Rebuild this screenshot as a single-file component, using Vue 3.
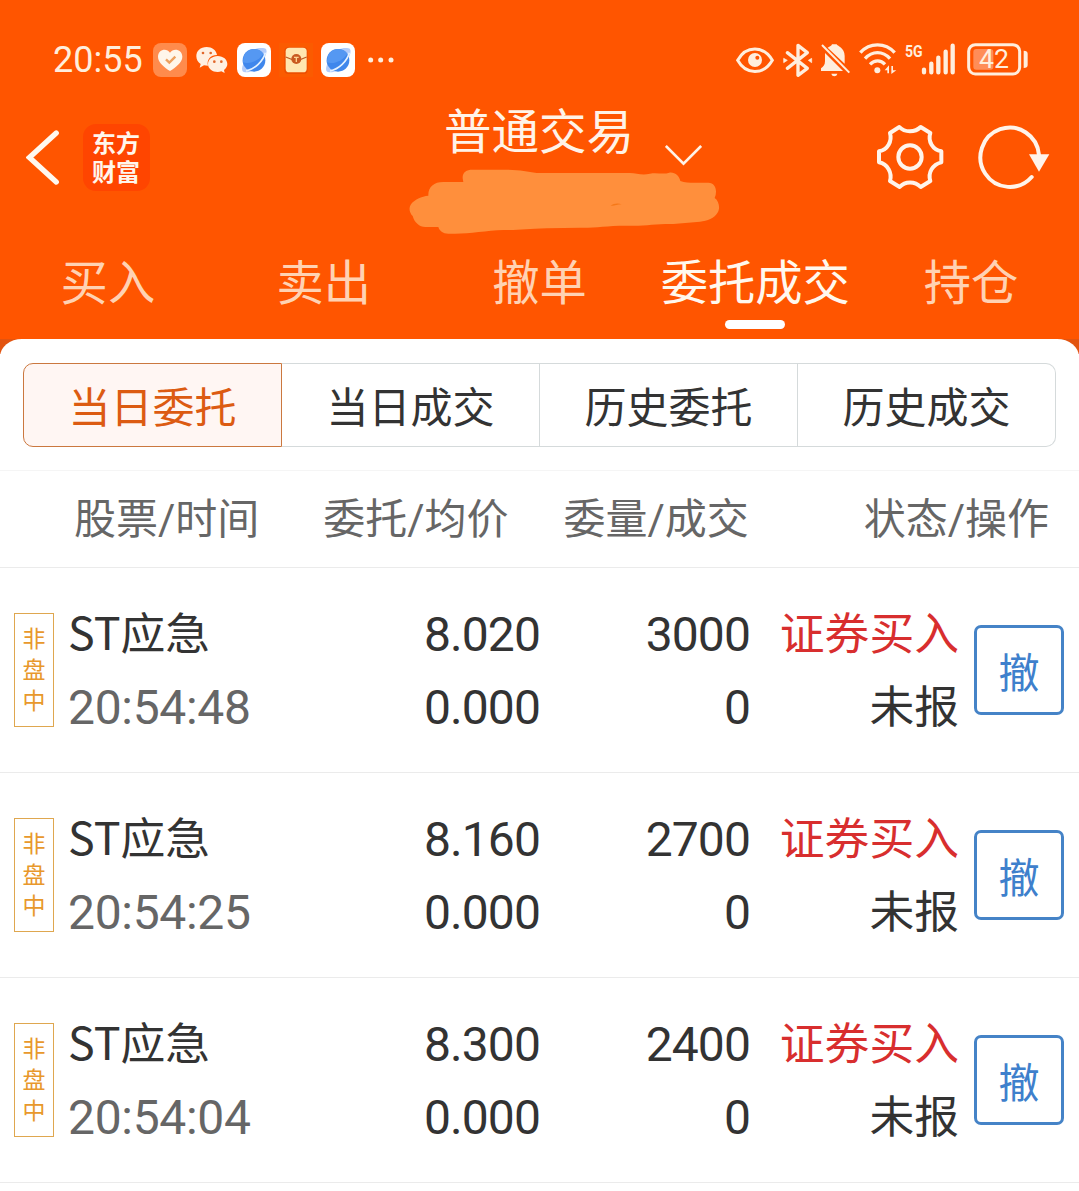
<template>
  <div class="app">
    <header class="header">
      <!-- Status bar -->
      <div class="status-bar">
        <div class="status-left">
          <span class="clock">20:55</span>
          <svg class="app-icon" viewBox="337 39 102 102">
            <rect x="337" y="39" width="102" height="102" rx="24" fill="#ff8b4c" />
            <path
              d="M388 123 C372 112 352 98 352 80 C352 58 378 52 388 68 C398 52 425 58 425 80 C425 98 404 112 388 123Z"
              fill="#fff6ea"
            />
            <path d="M376 88 L386 98 L404 80" fill="none" stroke="#eda05e" stroke-width="7" />
          </svg>
          <svg class="app-icon" viewBox="464 39 102 102">
            <path
              d="M499 51 C480 51 468 63 468 79 C468 89 473 97 481 102 L478 113 L491 106 C495 107 499 107 503 107 C498 89 511 75 530 75 C528 60 515 51 499 51Z"
              fill="#fff0e2"
            />
            <path
              d="M532 78 C515 78 503 89 503 102 C503 116 516 126 532 126 C536 126 540 125 543 124 L553 129 L551 120 C557 115 561 109 561 102 C561 89 549 78 532 78Z"
              fill="#fff0e2"
            />
            <circle cx="488" cy="69" r="4" fill="#e2682c" />
            <circle cx="511" cy="69" r="4" fill="#e2682c" />
            <circle cx="522" cy="95" r="4" fill="#e2682c" />
            <circle cx="543" cy="95" r="4" fill="#e2682c" />
          </svg>
          <svg class="app-icon" viewBox="0 0 102 102">
            <use href="#globe" />
          </svg>
          <svg class="app-icon" viewBox="715 39 102 102">
            <rect x="715" y="39" width="102" height="102" fill="#fb5b00" />
            <rect x="731" y="52" width="70" height="80" rx="12" fill="#ec4f00" />
            <rect x="735" y="53" width="63" height="74" rx="11" fill="#ffe7b0" />
            <path d="M735 81 L758 90 M798 81 L776 90" stroke="#bd5a22" stroke-width="4" />
            <circle cx="767" cy="87" r="15" fill="#c95a20" />
            <path d="M760 82 H774 M767 82 V96" stroke="#ffd28e" stroke-width="4" />
          </svg>
          <svg class="app-icon" viewBox="0 0 102 102">
            <g id="globe">
              <rect width="102" height="102" rx="24" fill="#fff" />
              <path
                d="M17 85 C12 76 18 62 26 50 L50 20 C66 13 82 14 87 18 C92 27 84 44 77 54 L54 80 C38 89 22 90 17 85Z"
                fill="#b3ccfa"
              />
              <circle cx="51" cy="52" r="34" fill="#3f87ec" />
              <path d="M22 35 A34 34 0 0 1 79 32 C68 49 43 66 17 58 Z" fill="#5598f2" />
              <path d="M27 84 C54 78 78 55 85 29" fill="none" stroke="#e4f2ff" stroke-width="5" />
            </g>
          </svg>
          <svg class="more-icon" viewBox="0 0 78 18">
            <circle cx="8" cy="9" r="7.5" fill="#ffeedd" />
            <circle cx="38" cy="9" r="7.5" fill="#ffeedd" />
            <circle cx="69" cy="9" r="7.5" fill="#ffeedd" />
          </svg>
        </div>

        <!-- System indicators -->
        <svg class="indicators" viewBox="30 30 885 120" fill="none" stroke="#ffeedd">
          <path d="M38 91 C63 46 116 46 142 91 C116 136 63 136 38 91Z" stroke-width="9" />
          <circle cx="90" cy="90" r="21" fill="#ffeedd" stroke="none" />
          <circle cx="97" cy="83" r="6" fill="#ff5500" stroke="none" />

          <path
            d="M187 68 L247 115 L219 136 V46 L247 68 L187 115"
            stroke-width="10"
            stroke-linejoin="round"
            stroke-linecap="round"
          />
          <path
            d="M176 85 L187 91 L176 98Z M260 85 L250 91 L260 98Z"
            fill="#ffeedd"
            stroke-width="2"
          />

          <path
            d="M308 53 C315 49 320 48 321 43 H335 C336 48 359 53 359 78 V101Z M300 69 L354 123 H288 V115 C295 110 300 105 300 94Z M319 131 H337 C335 141 321 141 319 131Z"
            fill="#ffeedd"
            stroke="none"
          />
          <path d="M291 45 L373 128" stroke-width="6" />

          <path d="M406 68 C434 37 481 37 509 68" stroke-width="10" />
          <path d="M420 86 C442 62 473 62 495 86" stroke-width="10" />
          <path d="M435 103 C449 89 467 89 480 103" stroke-width="10" />
          <circle cx="457" cy="121" r="9" fill="#ffeedd" stroke="none" />
          <path
            d="M479 121 L492 106 V130 H487 V121Z M499 108 V132 L514 121 H504 V108Z"
            fill="#ffeedd"
            stroke="none"
          />

          <text class="network" x="540" y="81" textLength="53" lengthAdjust="spacingAndGlyphs">5G</text>
          <path
            d="M597 119 V127 M619 101 V127 M640 83 V127 M662 65 V127 M683 47 V127"
            stroke-width="13"
            stroke-linecap="round"
          />

          <rect x="731" y="44" width="153" height="88" rx="20" stroke-width="9" />
          <rect x="745" y="57" width="60" height="62" rx="9" fill="#ff8d58" stroke="none" />
          <path
            d="M896 62 C904 62 908 65 908 71 V105 C908 111 904 114 896 114Z"
            fill="#ffeedd"
            stroke="none"
          />
          <text class="battery" x="762" y="115" textLength="90" lengthAdjust="spacingAndGlyphs">42</text>
        </svg>
      </div>

      <!-- Title bar -->
      <div class="nav">
        <div class="nav-left">
          <svg class="back-icon" viewBox="76 86 102 172">
            <path
              d="M167 98 L86 172 L167 246"
              fill="none"
              stroke="#fff8ef"
              stroke-width="16"
              stroke-linecap="round"
            />
          </svg>
          <div class="logo">东方财富</div>
        </div>

        <div class="nav-center">
          <div class="title-row">
            <h1 class="title">{{ title }}</h1>
            <svg class="chevron" viewBox="796 148 110 66">
              <path d="M798 154 L851 207 L904 154" fill="none" stroke="#fff3e8" stroke-width="8" />
            </svg>
          </div>
          <svg class="scribble" viewBox="27 222 936 198">
            <path
              d="M188 250 C187 232 198 224 218 224 H315 C360 224 380 230 410 234 H690 C710 234 725 242 750 236 C770 232 790 239 808 233 C826 231 838 244 841 258 C858 264 878 263 897 263 H925 C947 263 953 288 944 309 C958 318 960 341 954 351 C943 371 922 378 900 380 L820 387 C770 386 740 393 690 392 C620 391 590 399 540 398 L440 400 C380 402 360 406 310 405 C260 407 210 416 165 416 H145 C128 416 119 408 115 396 H76 C58 396 43 382 38 363 C28 354 26 338 32 329 C43 313 65 304 85 302 C84 276 101 261 130 261 H190Z"
              fill="#ff8f3c"
            />
            <path d="M632 332 C641 325 655 324 665 328 C650 328 642 334 632 332Z" fill="#f57818" />
          </svg>
        </div>

        <div class="nav-right">
          <svg class="gear-icon" viewBox="45 35 210 210" fill="none" stroke="#fff4ea" stroke-width="12">
            <path
              d="M118 50 C134 67 165 67 182 50 L211 68 C203 93 218 118 244 123 V156 C218 162 203 187 211 212 L182 230 C165 212 135 212 119 230 L90 212 C97 187 83 161 57 156 V123 C83 118 97 93 90 68Z"
              stroke-linejoin="round"
            />
            <circle cx="150" cy="140" r="35" />
          </svg>
          <svg class="refresh-icon" viewBox="350 35 225 210">
            <path
              d="M539 134 A88 89 0 1 0 517 200"
              fill="none"
              stroke="#fff4ea"
              stroke-width="12"
              stroke-linecap="round"
            />
            <path d="M509 132 H570 L539 184Z" fill="#fff4ea" />
          </svg>
        </div>
      </div>

      <!-- Main tabs -->
      <nav class="tabs">
        <button
          v-for="tab in tabs"
          :key="tab"
          type="button"
          class="tab"
          :class="{ active: tab === activeTab }"
          @click="activeTab = tab"
        >
          {{ tab }}
        </button>
      </nav>
    </header>

    <main class="panel-wrap">
      <div class="panel">
        <div class="segments">
          <button
            v-for="segment in segments"
            :key="segment"
            type="button"
            class="segment"
            :class="{ active: segment === activeSegment }"
            @click="activeSegment = segment"
          >
            {{ segment }}
          </button>
        </div>

        <div class="table-head">
          <span v-for="column in columns" :key="column">{{ column }}</span>
        </div>

        <!-- Orders -->
        <div v-for="order in orders" :key="order.time" class="order">
          <div class="tag">
            <span v-for="char in order.tag" :key="char">{{ char }}</span>
          </div>
          <div class="cell stock">
            <span class="cjk">{{ order.name }}</span>
            <span class="num time">{{ order.time }}</span>
          </div>
          <div class="cell">
            <span class="num">{{ order.price }}</span>
            <span class="num">{{ order.average }}</span>
          </div>
          <div class="cell">
            <span class="num">{{ order.quantity }}</span>
            <span class="num">{{ order.filled }}</span>
          </div>
          <div class="cell">
            <span class="cjk buy">{{ order.action }}</span>
            <span class="cjk">{{ order.status }}</span>
          </div>
          <button type="button" class="cancel">撤</button>
        </div>
      </div>
    </main>
  </div>
</template>

<script setup>
import { ref } from 'vue'

const title = '普通交易'

const tabs = ['买入', '卖出', '撤单', '委托成交', '持仓']
const activeTab = ref('委托成交')

const segments = ['当日委托', '当日成交', '历史委托', '历史成交']
const activeSegment = ref('当日委托')

const columns = ['股票/时间', '委托/均价', '委量/成交', '状态/操作']

// Orders of the day, newest first
const orders = [
  createOrder('20:54:48', '8.020', '3000'),
  createOrder('20:54:25', '8.160', '2700'),
  createOrder('20:54:04', '8.300', '2400'),
]

function createOrder(time, price, quantity) {
  return {
    tag: '非盘中',
    name: 'ST应急',
    time,
    price,
    average: '0.000',
    quantity,
    filled: '0',
    action: '证券买入',
    status: '未报',
  }
}
</script>

<style>
body {
  background: #fff;
}
</style>

<style scoped>
.app {
  width: 1079px;
  height: 1191px;
  overflow: hidden;
  background: #fff;
  color: #333;
  font-family: 'Noto Sans CJK SC', sans-serif;
}

button {
  padding: 0;
  border: none;
  background: none;
  color: inherit;
  font-family: inherit;
  cursor: pointer;
}

svg {
  display: block;
  flex-shrink: 0;
}

.header {
  height: 339px;
  background: #ff5500;
}

/* Status bar */
.status-bar {
  display: flex;
  justify-content: space-between;
  height: 95px;
  padding: 25px 49px 0 53px;
  box-sizing: border-box;
}

.status-left {
  display: flex;
  align-items: center;
  gap: 8px;
  height: 70px;
}

.clock {
  width: 91.5px;
  font-family: Roboto, sans-serif;
  font-size: 36px;
  line-height: 70px;
  color: #ffeedd;
}

.app-icon {
  width: 34px;
  height: 34px;
}

.more-icon {
  width: 26px;
  height: 6px;
  margin-left: 5px;
}

.indicators {
  width: 295px;
  height: 40px;
  margin-top: 15px;
}

.network {
  font: 700 52px Roboto, sans-serif;
  fill: #ffeedd;
  stroke: none;
}

.battery {
  font: 400 76px Roboto, sans-serif;
  fill: #ffeedd;
  stroke: none;
}

/* Title bar */
.nav {
  display: flex;
  height: 145px;
}

.nav-left {
  display: flex;
  align-items: flex-start;
  gap: 23px;
  width: 409px;
  padding: 29px 0 0 26px;
  box-sizing: border-box;
}

.back-icon {
  width: 34px;
  height: 57px;
  margin-top: 5px;
}

.logo {
  width: 67px;
  height: 67px;
  padding: 3px 9px 0;
  box-sizing: border-box;
  border-radius: 13px;
  background: #ff4500;
  color: #fff6ec;
  font-size: 24px;
  font-weight: 700;
  line-height: 29px;
}

.nav-center {
  width: 312px;
}

.title-row {
  display: flex;
  height: 74px;
  padding-left: 35px;
}

.title {
  margin: 0;
  font-size: 47.5px;
  font-weight: 400;
  line-height: 67px;
  color: #fff3e8;
}

.chevron {
  width: 37px;
  height: 22px;
  margin: 49px 0 0 31px;
}

.scribble {
  width: 312px;
  height: 66px;
}

.nav-right {
  display: flex;
  gap: 31px;
  padding: 27px 0 0 154px;
}

.gear-icon {
  width: 70px;
  height: 70px;
}

.refresh-icon {
  width: 75px;
  height: 70px;
}

/* Main tabs */
.tabs {
  display: grid;
  grid-template-columns: repeat(5, 1fr);
}

.tab {
  display: flex;
  flex-direction: column;
  align-items: center;
  padding-bottom: 1px;
  font-size: 47.3px;
  line-height: 79px;
  color: #ffd2b3;
}

.tab.active {
  color: #fff8ee;
}

.tab.active::after {
  content: '';
  width: 60px;
  height: 9px;
  margin-top: 1px;
  border-radius: 5px;
  background: #fff;
}

/* Rounded panel */
.panel-wrap {
  background: linear-gradient(#e25410 15px, #fff 15px);
}

.panel {
  padding-top: 24px;
  border-radius: 22px 22px 0 0 / 18px 18px 0 0;
  background: #fff;
}

.segments {
  display: grid;
  grid-template-columns: 259px repeat(3, 1fr);
  height: 84px;
  margin: 0 23px;
}

.segment {
  border: 1px solid #d5dadb;
  border-left-width: 0;
  font-size: 42px;
  line-height: 76px;
}

.segment:first-child {
  border-left-width: 1px;
  border-radius: 10px 0 0 10px;
}

.segment:last-child {
  border-radius: 0 10px 10px 0;
}

.segment.active {
  border-color: #cb783f;
  background: #fff6f3;
  color: #dc5b12;
}

.table-head {
  display: flex;
  justify-content: space-between;
  height: 98px;
  margin-top: 23px;
  padding: 0 30px 0 74px;
  box-sizing: border-box;
  border-top: 1px solid #f5f5f5;
  border-bottom: 1px solid #ebebeb;
  font-family: Roboto, 'Noto Sans CJK SC', sans-serif;
  font-size: 42px;
  line-height: 97px;
  color: #666;
}

.table-head span:nth-child(2) {
  margin-left: 9px;
}

.table-head span:nth-child(4) {
  margin-left: 60px;
}

/* Order row */
.order {
  display: grid;
  grid-template-columns: 40px 230px 256px 210px 209px 104px;
  height: 205px;
  padding-left: 14px;
  box-sizing: border-box;
  border-bottom: 1px solid #ebebeb;
}

.tag {
  display: flex;
  flex-direction: column;
  align-items: center;
  height: 114px;
  margin-top: 45px;
  padding-top: 8px;
  box-sizing: border-box;
  border: 1px solid #dfa74f;
  font-size: 23px;
  line-height: 31px;
  color: #e8982c;
}

.cell {
  display: flex;
  flex-direction: column;
  align-items: flex-end;
  padding-top: 30px;
}

.cell.stock {
  align-items: flex-start;
  padding-left: 14px;
}

.num {
  height: 73px;
  font-family: Roboto, sans-serif;
  font-size: 48px;
  line-height: 73px;
  letter-spacing: -0.9px;
}

.cjk {
  height: 73px;
  font-size: 44.8px;
  line-height: 66px;
}

.time {
  letter-spacing: -0.3px;
  color: #666;
}

.buy {
  color: #d82e2e;
}

.cancel {
  width: 90px;
  height: 90px;
  margin: 57px 0 0 15px;
  border: 3px solid #4583c7;
  border-radius: 7px;
  font-size: 41px;
  line-height: 74px;
  color: #3e80cc;
}
</style>
